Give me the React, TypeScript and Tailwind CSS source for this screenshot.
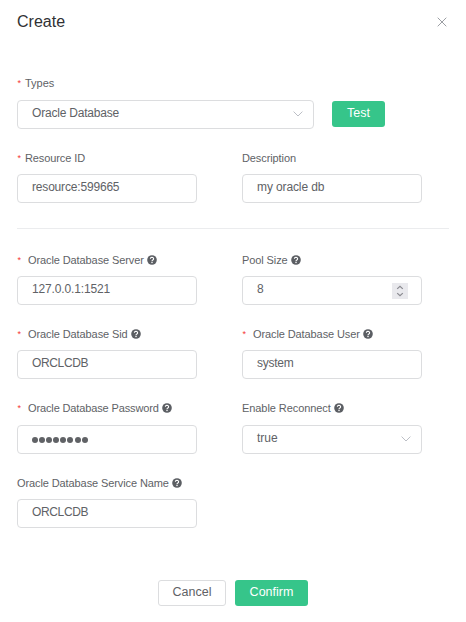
import type { ReactNode } from "react";

function Help() {
  return (
    <svg className="ml-[3.4px] h-[10px] w-[10px] shrink-0" viewBox="0 0 20 20" aria-hidden="true">
      <circle cx="10" cy="10" r="9.6" fill="#5b5e63" />
      <path d="M6.8 7.6a3.2 2.8 0 1 1 4.9 2.3c-1.1.7-1.7 1.1-1.7 2.4" fill="none" stroke="#fff" strokeWidth="2.3" />
      <circle cx="10" cy="15.2" r="1.5" fill="#fff" />
    </svg>
  );
}

function Chevron() {
  return (
    <svg className="mr-[10px] mt-[-2px] h-[6px] w-[10px] shrink-0" viewBox="0 0 10 6" fill="none" stroke="#b4b8c0" strokeWidth="0.9" aria-hidden="true">
      <path d="M.6.6 5 5 9.4.6" />
    </svg>
  );
}

function Stepper() {
  return (
    <span className="mr-[13px] mt-px flex h-4 w-4 shrink-0 items-center justify-center bg-[#e9e9ed]">
      <svg className="h-3 w-2" viewBox="0 0 8 12" fill="none" stroke="#8a8a90" strokeWidth="1.2" aria-hidden="true">
        <path d="M1.2 3.9 4 1.3l2.8 2.6M1.2 8.1 4 10.7l2.8-2.6" />
      </svg>
    </span>
  );
}

type FieldProps = {
  label: string;
  labelClass?: string;
  value: ReactNode;
  valueClass?: string;
  required?: boolean;
  wideStar?: boolean;
  help?: boolean;
  end?: ReactNode;
  width?: string;
  gap?: string;
};

function Field({
  label,
  labelClass = "tracking-[-0.1px]",
  value,
  valueClass = "",
  required,
  wideStar,
  help,
  end,
  width = "w-[180px]",
  gap = "mt-2",
}: FieldProps) {
  return (
    <div className={width}>
      <div className="flex h-4 items-center whitespace-nowrap text-[11px] leading-4">
        {required && (
          <span className={`${wideStar ? "w-[11px]" : "w-[8px]"} pl-[0.6px] text-[9px] text-[#f53636]`}>*</span>
        )}
        <span className={labelClass}>{label}</span>
        {help && <Help />}
      </div>
      <div className={`${gap} flex h-[29px] items-center justify-between rounded-[4px] border border-[#dcdddf] bg-white pl-[14px]`}>
        <span className={`-mt-[3px] whitespace-nowrap text-[12px] leading-4 ${valueClass}`}>{value}</span>
        {end}
      </div>
    </div>
  );
}

export default function App() {
  return (
    <main className="h-[622px] w-[466px] overflow-hidden bg-white pl-[17px] pr-[17px] pt-[12px] font-['Liberation_Sans',Arial,sans-serif] text-[#606266]">
      <header className="flex h-5 items-center justify-between">
        <h1 className="text-[16px] leading-5 text-[#303133]">Create</h1>
        <svg className="mr-[2px] h-[10px] w-[10px]" viewBox="0 0 10 10" stroke="#909399" strokeWidth="0.9" aria-label="Close">
          <path d="m.7.7 8.6 8.6M9.3.7.7 9.3" />
        </svg>
      </header>
      <div className="mt-[43px] flex items-end gap-[18px]">
        <Field
          label="Types"
          labelClass=""
          value="Oracle Database"
          valueClass="tracking-[-0.2px]"
          required
          width="w-[297px]"
          gap="mt-[9px]"
          end={<Chevron />}
        />
        <button className="mb-[2px] h-[26px] w-[53px] rounded-[3px] bg-[#36c58a] pb-[2px] text-[12.5px] leading-4 text-white">Test</button>
      </div>
      <div className="mt-[21px] flex gap-[45px]">
        <Field label="Resource ID" value="resource:599665" valueClass="tracking-[-0.18px]" required />
        <Field label="Description" value="my oracle db" valueClass="tracking-[-0.12px]" />
      </div>
      <hr className="mt-[25px] w-[432px] border-[#ebecee]" />
      <div className="mt-[23px] grid grid-cols-[180px_180px] gap-x-[45px] gap-y-[21px]">
        <Field label="Oracle Database Server" value="127.0.0.1:1521" valueClass="tracking-[-0.14px]" required wideStar help />
        <Field label="Pool Size" value="8" help end={<Stepper />} />
        <Field label="Oracle Database Sid" value="ORCLCDB" valueClass="tracking-[-0.35px]" required wideStar help />
        <Field label="Oracle Database User" value="system" valueClass="tracking-[-0.25px]" required wideStar help />
        <Field
          label="Oracle Database Password"
          labelClass="tracking-[-0.13px]"
          required
          wideStar
          help
          gap="mt-[9px]"
          value={
            <span className="mt-[3px] flex gap-[1.1px]" aria-label="Password">
              {Array.from({ length: 8 }, (_, i) => (
                <i key={i} className="h-[6px] w-[6px] rounded-full bg-[#606266]" />
              ))}
            </span>
          }
        />
        <Field label="Enable Reconnect" labelClass="tracking-[-0.07px]" value="true" help gap="mt-[9px]" end={<Chevron />} />
        <Field label="Oracle Database Service Name" value="ORCLCDB" valueClass="tracking-[-0.35px]" help />
      </div>
      <footer className="mt-[52px] flex gap-[9px] pl-[141px] text-[12.5px] leading-4">
        <button className="h-[26px] w-[68px] rounded-[3px] border border-[#dcdddf] pb-[2px]">Cancel</button>
        <button className="h-[26px] w-[73px] rounded-[3px] bg-[#36c58a] pb-[2px] text-white">Confirm</button>
      </footer>
    </main>
  );
}
